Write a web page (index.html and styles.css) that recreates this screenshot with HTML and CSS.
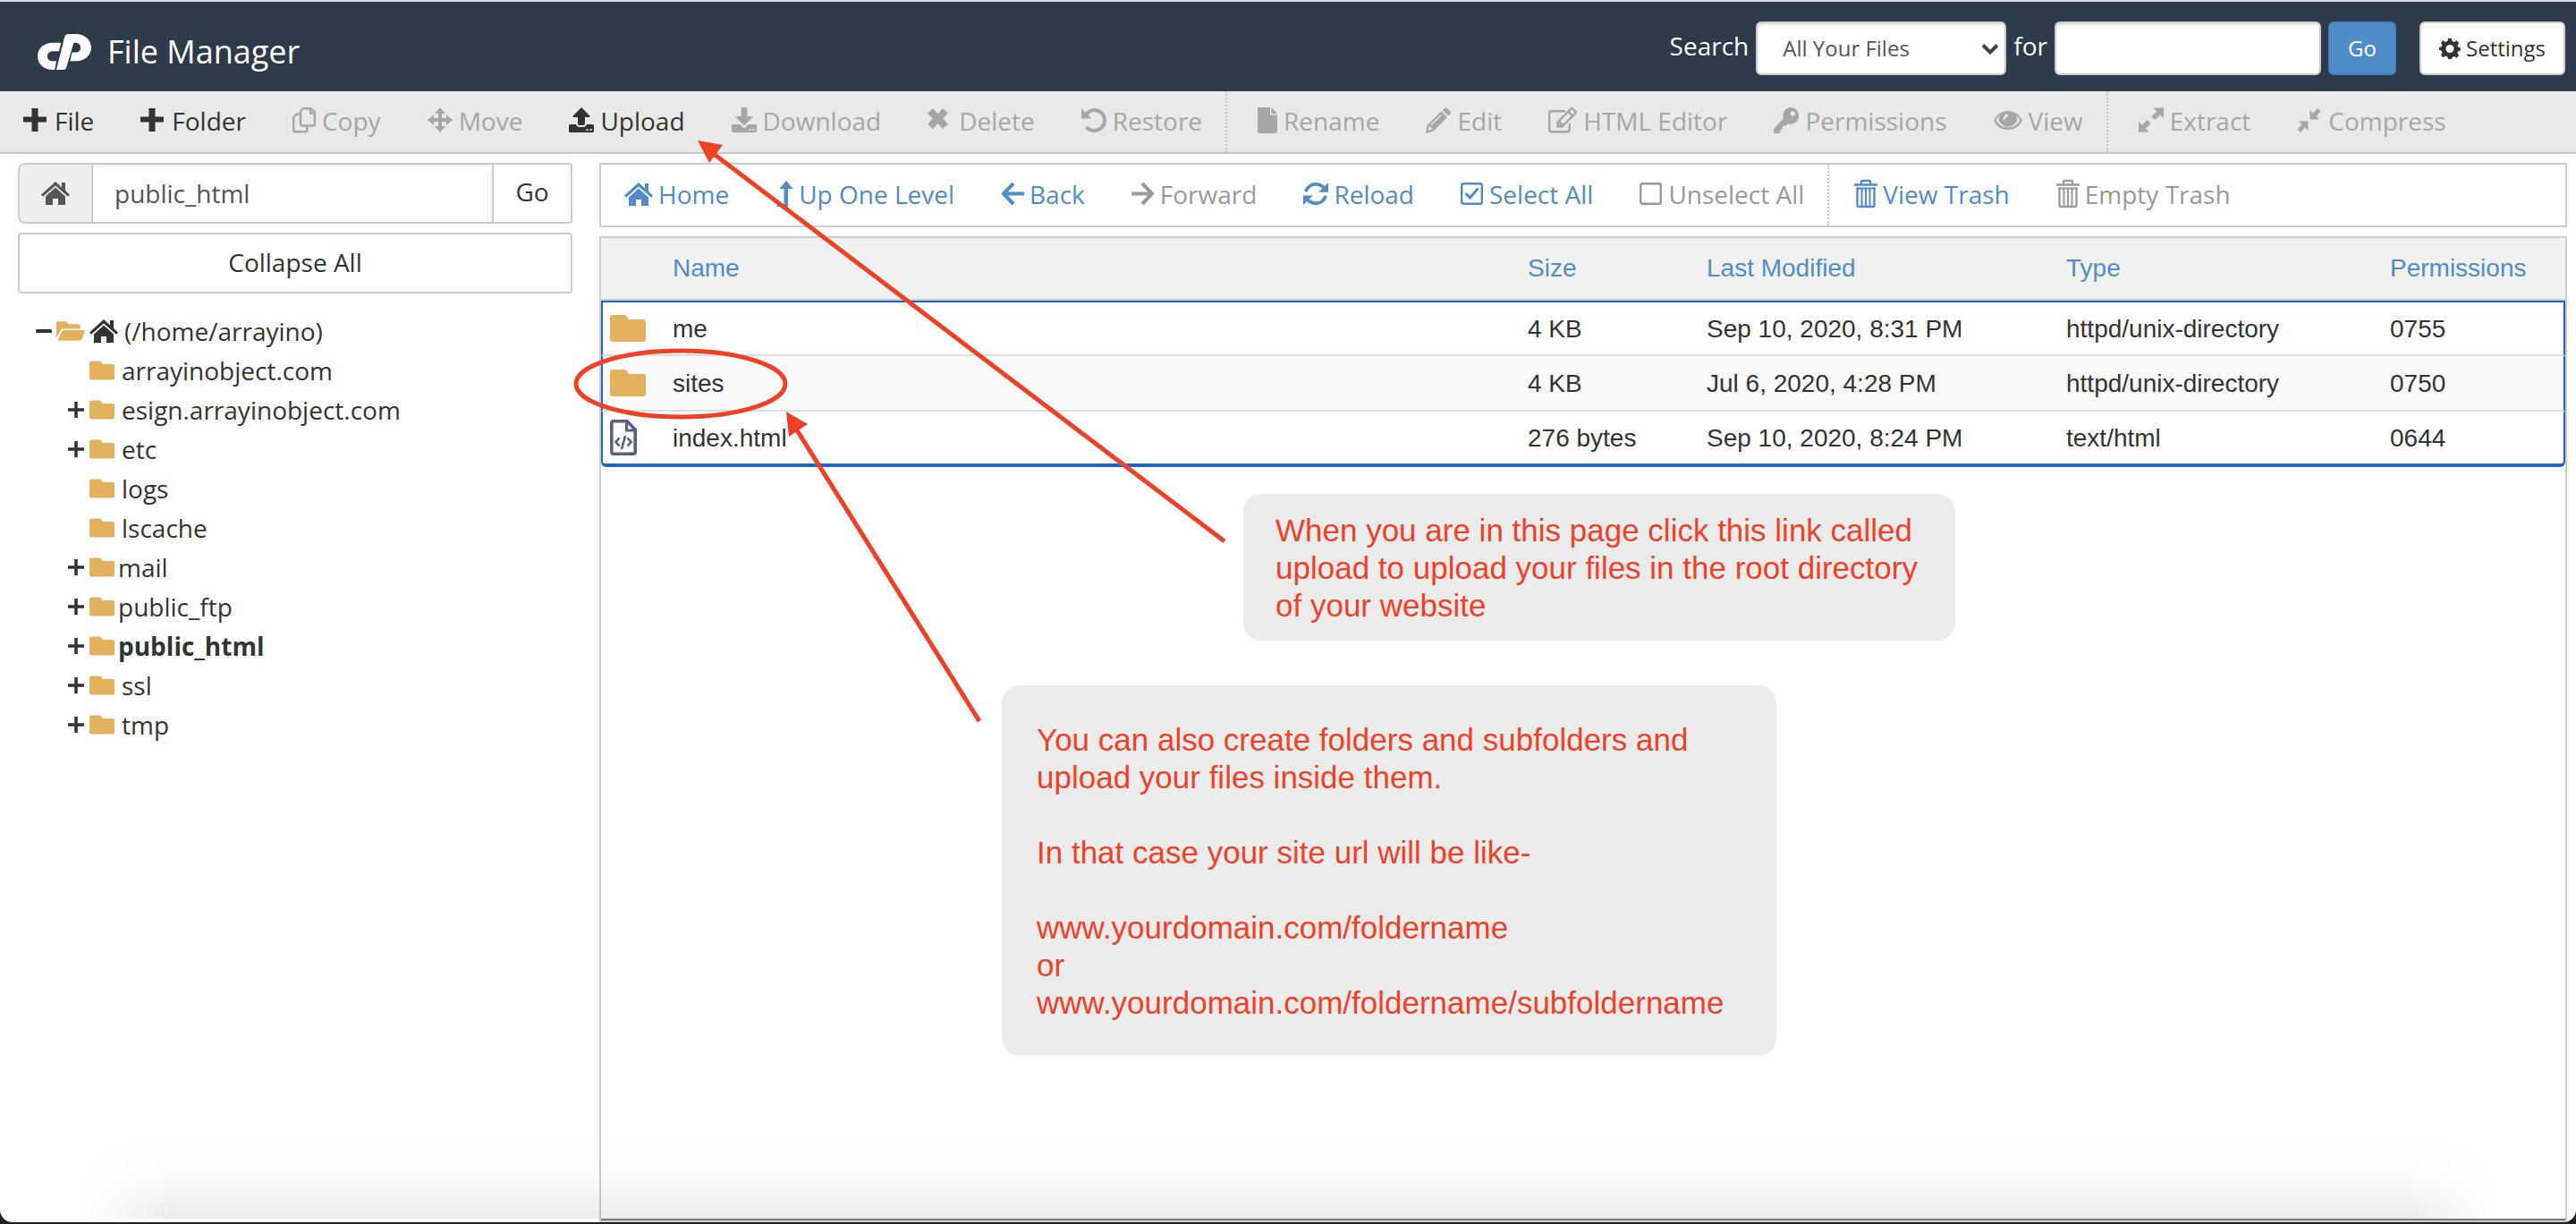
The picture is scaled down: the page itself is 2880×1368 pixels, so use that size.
FILE: index.html
```html
<!DOCTYPE html>
<html lang="en">
<head>
<meta charset="utf-8">
<title>File Manager</title>
<link rel="stylesheet" href="styles.css">
</head>
<body>
<svg class="sprite" aria-hidden="true">
  <symbol id="plus" viewBox="0 0 28 30"><path d="M9.500 1h7v9.500H26v6h-9.500V27h-7V16.500H0v-6h9.500z"/></symbol>
  <symbol id="home" viewBox="0 0 32 28"><path d="M16 1 0 15.500l2 2.300L16 5.400l14 12.400 2-2.300-5-4.500V2h-4v5.400z"/><path d="M16 7.600 5 17.400V27h8v-7h6v7h8v-9.600z"/></symbol>
  <symbol id="copy" viewBox="0 0 26 30"><g fill="none" stroke="currentColor" stroke-width="2.400" stroke-linejoin="round"><path d="M12 1.300h9l3.800 4.200v13.200q0 1.800-1.800 1.800H10.800Q9 20.500 9 18.700V4.500z"/><path d="M20 1.500v5h4.600M9 7.500H4.500L1.300 11v14.500q0 1.800 1.800 1.800h11.400q1.800 0 1.800-1.800v-5"/></g></symbol>
  <symbol id="move" viewBox="0 0 28 30"><path d="m14 0 6 7h-4v5h5V8l7 6-7 6v-4h-5v5h4l-6 7-6-7h4v-5H7v4l-7-6 7-6v4h5V7H8z"/></symbol>
  <symbol id="upload" viewBox="0 0 28 30"><path d="m14 0 9.500 9.500q.5 1.500-1 1.500H18v7q0 2-2 2h-4q-2 0-2-2v-7H5.500q-1.500 0-1-1.500z"/><path fill-rule="evenodd" d="M1.500 19H8q1 3 4 3h4q3 0 4-3h6.500q1.500 0 1.500 1.500v6q0 1.500-1.500 1.500h-25Q0 28 0 26.500v-6Q0 19 1.500 19zM19.500 24v2h2v-2zm4 0v2h2v-2z"/></symbol>
  <symbol id="download" viewBox="0 0 28 30"><path d="M12 0h4q1.500 0 1.500 1.500V10H22q1.500 0 1 1.500l-9 9-9-9q-.5-1.500 1-1.500h4.500V1.500Q10.500 0 12 0z"/><path fill-rule="evenodd" d="M1.500 19H9.500l4.500 4.500 4.500-4.500h8q1.500 0 1.500 1.500v6q0 1.500-1.500 1.500h-25Q0 28 0 26.500v-6Q0 19 1.500 19zM19.500 24v2h2v-2zm4 0v2h2v-2z"/></symbol>
  <symbol id="delete" viewBox="0 0 28 30"><path d="m6 1 5.500 6.200L17 1l6 5.500-5.500 6L23 18.700 17 24l-5.500-6L6 24 0 18.700l5.500-6.200L0 6.500z"/></symbol>
  <symbol id="restore" viewBox="0 0 28 30"><path fill="none" stroke="currentColor" stroke-width="4" d="M5 8.500C8 4.500 11 3 14.500 3 21 3 26 8 26 14.500S21 26 14.500 26c-3.500 0-6.500-1.200-9-4"/><path d="M0 1v11.500h11.500L8 9 3.500 4.500z"/></symbol>
  <symbol id="page" viewBox="0 0 22 30"><path d="M1.500 0H14v8.500h8V27q0 2-2 2H2q-2 0-2-2V1.500Q0 0 1.500 0z"/><path d="M15.500 0v7H22z"/></symbol>
  <symbol id="pencil" viewBox="0 0 28 30"><path fill-rule="evenodd" d="M17.500 4.500 24 11 8.500 26.500 0 29l1.500-9zM3.500 21.500l-.8 4.500 4.300-1.400v-1.800H5.300v-1.300zM17 7.800 5.500 19.300l1 1L18 8.800z"/><path d="M18.800 3.200 21 1q1.500-1.400 3 0l3.300 3.300q1.400 1.500 0 3L25.200 9.500z"/></symbol>
  <symbol id="compose" viewBox="0 0 32 30"><g fill="none" stroke="currentColor" stroke-width="2.400" stroke-linejoin="round"><path d="M19 4.200H4.200q-3 0-3 3v17q0 3 3 3h16.600q3 0 3-3V18"/><path d="M10.500 21.500v-5L25.300 1.700q.9-.9 1.800 0l3.200 3.200q.9.900 0 1.800L15.500 21.500z"/><path d="m22.500 4.800 4.800 4.800M11 16.500h2.500V19h2.300v2"/></g></symbol>
  <symbol id="key" viewBox="0 0 28 30"><path fill-rule="evenodd" d="M19 0a9 9 0 0 1 9 9.500 9 9 0 0 1-12 8.700L13 21H10v3.500H7.500V28L6 29H1.500Q0 29 0 27.500V24l11-11.500A9 9 0 0 1 19 0zm2.500 4.200a2.700 2.700 0 1 0 0 5.400 2.700 2.700 0 0 0 0-5.400z"/></symbol>
  <symbol id="eye" viewBox="0 0 32 30"><path fill-rule="evenodd" d="M16 4c7 0 13 4.500 16 10.500C29 21 23 25 16 25S3 21 0 14.500C3 8.500 9 4 16 4zM7 8.500c-2 1.600-3.500 3.700-4.500 6C5 19 10 22.500 16 22.500s11-3.500 13.500-8c-1-2.300-2.500-4.400-4.500-6 4 9-3 11.500-9 11.500S3 17.500 7 8.500z"/><circle cx="16" cy="13.500" r="8.500"/><path class="eye-cut" d="M16 7.500v3c-2 0-3 1.200-3 3h-2.500c0-3.500 2-6 5.500-6z"/></symbol>
  <symbol id="extract" viewBox="0 0 29 30"><path d="M17 0h12v12l-4-4-6 6-4-4 6-6zM0 28V16l4 4 6-6 4 4-6 6 4 4z"/></symbol>
  <symbol id="compress" viewBox="0 0 27 30"><path d="M14 3v10.500h10.500L21 10l5-5.500L22.500 1l-5 5.500zM12 26V15.500H1.500L5 19l-5 5.500L3.500 28l5-5.500z"/></symbol>
  <symbol id="level-up" viewBox="0 0 20 30"><path d="m12 0 7.500 9H14v20H1l2.500-3H9.500V9H4.500z"/></symbol>
  <symbol id="left" viewBox="0 0 26 30"><path fill="none" stroke="currentColor" stroke-width="4" d="M14 3 3 14.500 14 26M3 14.500h23"/></symbol>
  <symbol id="right" viewBox="0 0 26 30"><path fill="none" stroke="currentColor" stroke-width="4" d="m12 3 11 11.500L12 26M23 14.500H0"/></symbol>
  <symbol id="reload" viewBox="0 0 30 30"><path fill="none" stroke="currentColor" stroke-width="4" d="M3 12C5 6 10 3 15 3q6 0 10.500 5M27 17c-2 6-7 9-12 9q-6 0-10.500-5"/><path d="M30 1v11.500H18.500zM0 28V16.500h11.500z"/></symbol>
  <symbol id="checked" viewBox="0 0 26 30"><rect x="1.200" y="3.200" width="22.600" height="22.600" rx="2" fill="none" stroke="currentColor" stroke-width="2.400"/><path fill="none" stroke="currentColor" stroke-width="3" d="m5.500 14 5 5 9-10.500"/></symbol>
  <symbol id="unchecked" viewBox="0 0 26 30"><rect x="1.200" y="3.200" width="22.600" height="22.600" rx="2" fill="none" stroke="currentColor" stroke-width="2.400"/></symbol>
  <symbol id="trash" viewBox="0 0 26 34"><path fill="none" stroke="currentColor" stroke-width="2.400" d="M0 6.500h26M8 6V3.500Q8 2 9.500 2h7Q18 2 18 3.500V6M3.500 9.500v20q0 1.500 1.500 1.500h16q1.500 0 1.500-1.500v-20"/><path fill="none" stroke="currentColor" stroke-width="2" d="M2.500 10.500h21M8.500 10v20M13 10v20M17.500 10v20"/></symbol>
  <symbol id="gear" viewBox="0 0 24 24"><path fill-rule="evenodd" d="M10 1h4l.6 3 2.300 1 2.600-1.700 2.700 2.700L20.500 8.600l1 2.300 2.500.6v3l-2.600.6-1 2.300 1.800 2.600-2.700 2.700-2.600-1.700-2.300 1L14 24h-4l-.6-2.500-2.300-1-2.600 1.700-2.700-2.700 1.700-2.600-1-2.300L0 14v-3l2.500-.6 1-2.300L1.800 6l2.700-2.700L7.100 5l2.300-1zM12 8a4.500 4.500 0 1 0 0 9 4.500 4.500 0 0 0 0-9z"/></symbol>
  <symbol id="minus" viewBox="0 0 18 18"><path d="M1 7h16q1 0 1 2t-1 2H1q-1 0-1-2t1-2z"/></symbol>
  <symbol id="expand" viewBox="0 0 18 18"><path d="M7.200 0h3.600v7.200H18v3.600h-7.200V18H7.200v-7.200H0V7.200h7.200z"/></symbol>
  <symbol id="folder" viewBox="0 0 40 30"><path d="M3 0h13q2 0 3 2l2 3h16q3 0 3 3v19q0 3-3 3H3q-3 0-3-3V3q0-3 3-3z"/></symbol>
  <symbol id="folder-open" viewBox="0 0 33 22"><path d="M0 19V2Q0 0 2 0h8q2 0 2.500 1.500L13.500 3H25q2.500 0 2.500 2.500v3H8Q5.500 8.500 4.500 11z"/><path d="M1.500 22 6 11.800Q6.800 10 9 10h22.500q2 0 1.300 1.800l-3 8Q29 22 26.500 22z"/></symbol>
  <symbol id="code-file" viewBox="0 0 30 40"><path fill="none" stroke="currentColor" stroke-width="3.600" stroke-linejoin="round" d="M4 1.800h15l9.200 9.400V36q0 2.200-2.200 2.200H4q-2.200 0-2.200-2.200V4Q1.800 1.800 4 1.800z"/><path fill="none" stroke="currentColor" stroke-width="3" d="M18.500 2v10H28"/><path fill="none" stroke="currentColor" stroke-width="2.600" d="M10.500 20.500 6.500 25l4 4.500m9-9 4 4.500-4 4.500M17 18l-4 15"/></symbol>
</svg>

<div class="window">
  <header class="header">
    <h1 class="brand">
      <svg class="logo" viewBox="0 0 60 40" aria-hidden="true"><path d="M26.200 9.700H17C8 9.700 0 15 0 25c0 9 8 15 17 15h2.300L21 30.300h-3.500c-4 0-6.500-1.800-6.500-5.300s2.500-5.700 6.500-5.700H24z"/><path d="M30.300 3c.7-2 2.200-3 4.200-3H43c10 0 17 7 17 15.300 0 8.700-7 15-17 15h-6.700l2.300-9.700h3.900c3.500 0 5.500-2.100 5.500-5.300s-2-5.600-5.500-5.600h-2.100l-7.900 26.800C31.800 39 31 40 28.500 40H21z"/></svg>
      File Manager
    </h1>
    <form class="search">
      <label class="search-label" for="scope">Search</label>
      <span class="select-box">
        <select id="scope" class="control select"><option>All Your Files</option></select>
        <svg class="caret" viewBox="0 0 20 14" aria-hidden="true"><path d="m2 2.500 8 8 8-8"/></svg>
      </span>
      <label class="search-label" for="query">for</label>
      <input id="query" class="control query" type="text">
      <button class="control primary" type="button">Go</button>
      <button class="control settings" type="button"><svg class="icon-gear"><use href="#gear"/></svg>Settings</button>
    </form>
  </header>

  <nav class="toolbar" aria-label="File actions">
    <button class="tool"><svg class="w28"><use href="#plus"/></svg>File</button>
    <button class="tool"><svg class="w28"><use href="#plus"/></svg>Folder</button>
    <button class="tool" disabled><svg class="w26"><use href="#copy"/></svg>Copy</button>
    <button class="tool" disabled><svg class="w28"><use href="#move"/></svg>Move</button>
    <button class="tool"><svg class="w28"><use href="#upload"/></svg>Upload</button>
    <button class="tool" disabled><svg class="w28"><use href="#download"/></svg>Download</button>
    <button class="tool" disabled><svg class="w28"><use href="#delete"/></svg>Delete</button>
    <button class="tool" disabled><svg class="w28"><use href="#restore"/></svg>Restore</button>
    <span class="divider"></span>
    <button class="tool" disabled><svg class="w22"><use href="#page"/></svg>Rename</button>
    <button class="tool" disabled><svg class="w28"><use href="#pencil"/></svg>Edit</button>
    <button class="tool" disabled><svg class="w32"><use href="#compose"/></svg>HTML Editor</button>
    <button class="tool" disabled><svg class="w28"><use href="#key"/></svg>Permissions</button>
    <button class="tool" disabled><svg class="w32"><use href="#eye"/></svg>View</button>
    <span class="divider"></span>
    <button class="tool" disabled><svg class="w28"><use href="#extract"/></svg>Extract</button>
    <button class="tool" disabled><svg class="w28"><use href="#compress"/></svg>Compress</button>
  </nav>

  <div class="workspace">
    <aside class="sidebar">
      <form class="path">
        <label class="path-home" for="path" aria-label="Path"><svg class="home-icon"><use href="#home"/></svg></label>
        <input id="path" class="path-input" type="text" value="public_html">
        <button class="path-go" type="button">Go</button>
      </form>
      <button class="collapse" type="button">Collapse All</button>
      <ul class="tree">
        <li class="node root"><svg class="toggle"><use href="#minus"/></svg><svg class="open-icon"><use href="#folder-open"/></svg><svg class="home-icon"><use href="#home"/></svg><a href="#">(/home/arrayino)</a></li>
        <li class="node"><span class="toggle"></span><svg class="folder-icon"><use href="#folder"/></svg><a href="#">arrayinobject.com</a></li>
        <li class="node"><svg class="toggle"><use href="#expand"/></svg><svg class="folder-icon"><use href="#folder"/></svg><a href="#">esign.arrayinobject.com</a></li>
        <li class="node"><svg class="toggle"><use href="#expand"/></svg><svg class="folder-icon"><use href="#folder"/></svg><a href="#">etc</a></li>
        <li class="node"><span class="toggle"></span><svg class="folder-icon"><use href="#folder"/></svg><a href="#">logs</a></li>
        <li class="node"><span class="toggle"></span><svg class="folder-icon"><use href="#folder"/></svg><a href="#">lscache</a></li>
        <li class="node tight"><svg class="toggle"><use href="#expand"/></svg><svg class="folder-icon"><use href="#folder"/></svg><a href="#">mail</a></li>
        <li class="node tight"><svg class="toggle"><use href="#expand"/></svg><svg class="folder-icon"><use href="#folder"/></svg><a href="#">public_ftp</a></li>
        <li class="node tight current"><svg class="toggle"><use href="#expand"/></svg><svg class="folder-icon"><use href="#folder"/></svg><a href="#">public_html</a></li>
        <li class="node"><svg class="toggle"><use href="#expand"/></svg><svg class="folder-icon"><use href="#folder"/></svg><a href="#">ssl</a></li>
        <li class="node"><svg class="toggle"><use href="#expand"/></svg><svg class="folder-icon"><use href="#folder"/></svg><a href="#">tmp</a></li>
      </ul>
    </aside>

    <main class="main">
      <nav class="toolbar actions" aria-label="Navigation">
        <button class="tool"><svg class="w32 home-icon"><use href="#home"/></svg>Home</button>
        <button class="tool"><svg class="w20"><use href="#level-up"/></svg>Up One Level</button>
        <button class="tool"><svg class="w26"><use href="#left"/></svg>Back</button>
        <button class="tool" disabled><svg class="w26"><use href="#right"/></svg>Forward</button>
        <button class="tool"><svg class="w28"><use href="#reload"/></svg>Reload</button>
        <button class="tool"><svg class="w26"><use href="#checked"/></svg>Select All</button>
        <button class="tool" disabled><svg class="w26"><use href="#unchecked"/></svg>Unselect All</button>
        <span class="divider"></span>
        <button class="tool"><svg class="w26 trash"><use href="#trash"/></svg>View Trash</button>
        <button class="tool" disabled><svg class="w26 trash"><use href="#trash"/></svg>Empty Trash</button>
      </nav>
      <div class="files">
        <table class="table">
          <colgroup><col class="col-icon"><col><col class="col-size"><col class="col-date"><col class="col-type"><col class="col-perm"></colgroup>
          <thead>
            <tr><th></th><th>Name</th><th>Size</th><th>Last Modified</th><th>Type</th><th>Permissions</th></tr>
          </thead>
          <tbody>
            <tr><td><svg class="row-folder"><use href="#folder"/></svg></td><td>me</td><td>4 KB</td><td>Sep 10, 2020, 8:31 PM</td><td>httpd/unix-directory</td><td>0755</td></tr>
            <tr><td><svg class="row-folder"><use href="#folder"/></svg></td><td>sites</td><td>4 KB</td><td>Jul 6, 2020, 4:28 PM</td><td>httpd/unix-directory</td><td>0750</td></tr>
            <tr><td><svg class="row-file"><use href="#code-file"/></svg></td><td>index.html</td><td>276 bytes</td><td>Sep 10, 2020, 8:24 PM</td><td>text/html</td><td>0644</td></tr>
          </tbody>
        </table>
      </div>
    </main>
  </div>

  <svg class="marks" aria-hidden="true">
    <ellipse cx="761" cy="429" rx="117" ry="37"/>
    <path d="M1369 605 794 169M1095 806 888 476"/>
    <path class="head" d="m780 157 28 5-15 20zM879 460l24 14-21 14z"/>
  </svg>
  <p class="note note-upload">When you are in this page click this link called<br>upload to upload your files in the root directory<br>of your website</p>
  <p class="note note-folders">You can also create folders and subfolders and<br>upload your files inside them.<br><br>In that case your site url will be like-<br><br>www.yourdomain.com/foldername<br>or<br>www.yourdomain.com/foldername/subfoldername</p>
</div>
</body>
</html>
```
FILE: styles.css
```css
* { box-sizing: border-box; }

body {
  margin: 0;
  min-height: 100vh;
  display: flex;
  padding-bottom: 2px;
  background: #202022;
  color: #333;
  font: 28px/44px "Open Sans", sans-serif;
}

button, input, select { font: inherit; color: inherit; margin: 0; }
button { cursor: pointer; }
a { color: inherit; text-decoration: none; }
svg { fill: currentColor; flex: none; }
.sprite { position: absolute; width: 0; height: 0; }
.eye-cut { fill: #e9e9e9; }

.window {
  position: relative;
  flex: 1;
  display: flex;
  flex-direction: column;
  border-top: 2px solid #d9dade;
  border-radius: 0 0 14px 14px;
  background: #fff;
  overflow: hidden;
}

/* soft shade along the lower edge of the window */
.window::after {
  content: "";
  position: absolute;
  left: 0;
  right: 0;
  bottom: 4px;
  height: 90px;
  background: linear-gradient(rgba(0, 0, 0, 0), rgba(0, 0, 0, 0.02) 50%, rgba(0, 0, 0, 0.08));
  mask-image: linear-gradient(to right, transparent 90px, #000 190px, #000 calc(100% - 190px), transparent calc(100% - 90px));
  pointer-events: none;
}

/* header */
.header {
  display: flex;
  justify-content: space-between;
  align-items: flex-start;
  padding: 22px 12px 10px 42px;
  background: #2d3a4a;
  color: #fff;
}
.brand {
  display: flex;
  align-items: center;
  gap: 18px;
  height: 68px;
  margin: 0;
  font-size: 36px;
  font-weight: 400;
}
.logo { width: 60px; height: 40px; }
.search { display: flex; align-items: flex-start; gap: 8px; }
.search-label { line-height: 54px; }
.control {
  height: 60px;
  border: 2px solid #ccc;
  border-radius: 6px;
  background: #fff;
  color: #333;
  font-size: 24px;
}
.select, .query { box-shadow: inset 0 2px 3px rgba(0, 0, 0, 0.12); }
.select-box { position: relative; display: flex; }
.select { width: 280px; padding: 0 28px; appearance: none; color: #555; }
.caret {
  position: absolute;
  right: 8px;
  top: 24px;
  width: 20px;
  height: 14px;
  fill: none;
  stroke: #444;
  stroke-width: 4;
}
.query { width: 298px; padding: 0 24px; }
.primary { width: 76px; padding: 0; border-color: #4580bd; background: #4f8cc9; color: #fff; }
.settings {
  display: flex;
  align-items: center;
  gap: 6px;
  margin-left: 18px;
  padding: 0 20px;
}
.icon-gear { width: 24px; height: 24px; }

/* toolbars */
.toolbar {
  display: flex;
  height: 70px;
  border-bottom: 2px solid #c3c6cb;
  background: #e9e9e9;
}
.tool {
  display: flex;
  align-items: center;
  gap: 7px;
  padding: 0 26px 2px;
  border: 0;
  background: none;
  white-space: nowrap;
}
.tool:disabled { color: #a6a6a6; cursor: default; }
.tool svg { height: 30px; }
.tool .home-icon { height: 28px; }
.tool .trash { height: 34px; }
.w20 { width: 20px; }
.w22 { width: 22px; }
.w26 { width: 26px; }
.w28 { width: 28px; }
.w32 { width: 32px; }
.divider { border-left: 2px dotted #c8c8c8; margin-right: 8px; }
.actions { height: 72px; border: 2px solid #ccc; background: #fff; color: #4f8cc9; }
.actions .tool { gap: 6px; }
.actions .tool:disabled { color: #999; }
.actions .divider { margin-right: 2px; }

/* layout below the toolbar */
.workspace { flex: 1; display: flex; gap: 30px; padding: 10px 10px 0 20px; }
.sidebar { flex: 0 0 620px; }
.main { flex: 1; display: flex; flex-direction: column; gap: 10px; }

.path { display: flex; height: 68px; margin-bottom: 10px; }
.path-home {
  display: flex;
  align-items: center;
  justify-content: center;
  width: 82px;
  border: 2px solid #ccc;
  border-right: 0;
  border-radius: 8px 0 0 8px;
  background: #eee;
  color: #555;
}
.path-input {
  flex: 1;
  min-width: 0;
  padding: 0 24px;
  border: 2px solid #ccc;
  box-shadow: inset 0 2px 3px rgba(0, 0, 0, 0.08);
  color: #555;
}
.path-go { width: 88px; padding: 0 0 4px; border: 2px solid #ccc; border-left: 0; border-radius: 0 4px 4px 0; background: #fff; }
.collapse { width: 100%; height: 68px; padding: 0 0 2px; border: 2px solid #ccc; border-radius: 4px; background: #fff; }

.home-icon { width: 32px; height: 28px; }
.tree { margin: 20px 0 0; padding: 0; list-style: none; }
.node { display: flex; align-items: center; gap: 6px; height: 44px; padding-left: 56px; }
.root { padding-left: 20px; gap: 5px; }
.toggle { width: 18px; height: 18px; }
.node a { padding-left: 2px; }
.tight a { padding: 0; margin-left: -2px; }
.current { font-weight: 700; }
.open-icon { width: 32px; height: 22px; color: #e3b05e; }
.folder-icon { width: 28px; height: 22px; color: #e3b05e; }

/* file list */
.files {
  position: relative;
  flex: 1;
  border: 2px solid #ccc;
  box-shadow: inset 0 -2px 0 #777;
}
.table {
  width: 100%;
  table-layout: fixed;
  border-spacing: 0;
  font: 28px/32px "Liberation Sans", Arial, sans-serif;
}
.col-icon { width: 72px; }
.col-size { width: 200px; }
.col-date { width: 402px; }
.col-type { width: 362px; }
.col-perm { width: 204px; }
.table th {
  height: 70px;
  padding: 0 8px;
  border-bottom: 2px solid #ccc;
  background: #f1f1f1;
  color: #4f8cc9;
  font-weight: 400;
  text-align: left;
}
.table td { height: 62px; padding: 2px 8px 0; border-bottom: 2px solid #ddd; }
.table td svg { display: block; }
.table td:first-child { padding: 0 8px; border-left: 2px solid #2463c6; }
.table td:last-child { border-right: 2px solid #2463c6; }
.table tbody tr:nth-child(even) td { background: #f9f9f9; }
.table tbody tr:first-child td { border-top: 2px solid #2463c6; }
.table tbody tr:last-child td { border-bottom: 4px solid #2463c6; }
.table tbody tr:last-child td:first-child { border-bottom-left-radius: 6px; }
.table tbody tr:last-child td:last-child { border-bottom-right-radius: 6px; }
.row-folder { width: 40px; height: 30px; color: #e3b05e; }
.row-file { width: 30px; height: 40px; color: #56617f; }

/* annotations laid over the page */
.marks {
  position: absolute;
  left: 0;
  top: -2px;
  width: 100%;
  height: 100%;
  fill: none;
  stroke: #ee4126;
  stroke-width: 5;
  pointer-events: none;
}
.marks .head { fill: #ee4126; stroke: none; }
.note {
  position: absolute;
  margin: 0;
  border-radius: 20px;
  background: #ebebeb;
  color: #ee4126;
  font: 35px/42px "Liberation Sans", Arial, sans-serif;
  white-space: nowrap;
}
.note-upload { left: 1390px; top: 550px; width: 796px; padding: 20px 36px 18px; }
.note-folders { left: 1120px; top: 764px; width: 866px; padding: 40px 39px 38px; }
```
